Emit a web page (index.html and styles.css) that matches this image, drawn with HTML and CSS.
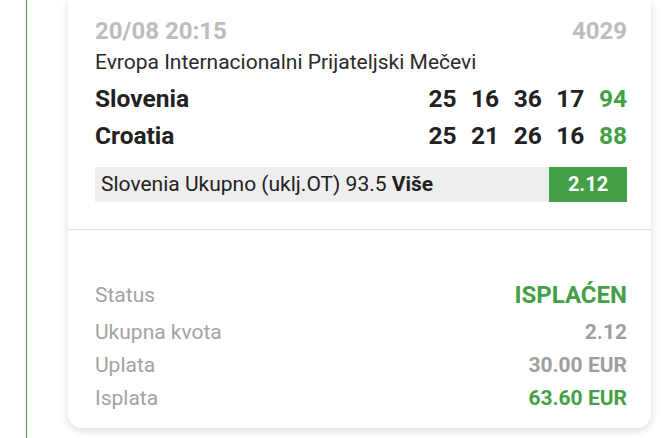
FILE: index.html
```html
<!DOCTYPE html>
<html lang="hr">
<head>
    <meta charset="UTF-8">
    <meta name="viewport" content="width=device-width, initial-scale=1.0">
    <title>Listić 4029</title>
    <link rel="stylesheet" href="styles.css">
</head>
<body>
    <div class="page">
        <div class="ticket">
            <div class="event">
                <div class="event-head">
                    <span class="date">20/08 20:15</span>
                    <span class="code">4029</span>
                </div>
                <div class="league">Evropa Internacionalni Prijateljski Mečevi</div>
                <div class="team-row">
                    <span class="team">Slovenia</span>
                    <span class="scores">
                        <span>25</span><span>16</span><span>36</span><span>17</span><span class="total">94</span>
                    </span>
                </div>
                <div class="team-row">
                    <span class="team">Croatia</span>
                    <span class="scores">
                        <span>25</span><span>21</span><span>26</span><span>16</span><span class="total">88</span>
                    </span>
                </div>
                <div class="bet">
                    <span class="bet-name">Slovenia Ukupno (uklj.OT) 93.5 <b>Više</b></span>
                    <span class="odd">2.12</span>
                </div>
            </div>
            <div class="summary">
                <div class="sum-row status-row">
                    <span class="label">Status</span>
                    <span class="value green">ISPLAĆEN</span>
                </div>
                <div class="sum-row">
                    <span class="label">Ukupna kvota</span>
                    <span class="value">2.12</span>
                </div>
                <div class="sum-row">
                    <span class="label">Uplata</span>
                    <span class="value">30.00 EUR</span>
                </div>
                <div class="sum-row">
                    <span class="label">Isplata</span>
                    <span class="value green">63.60 EUR</span>
                </div>
            </div>
        </div>
    </div>
</body>
</html>
```

FILE: styles.css
```css
body {
    margin: 0;
    padding: 0;
    background: #fff;
    font-family: Roboto, "Noto Sans", sans-serif;
    color: #222;
}
.page {
    margin-left: 26px;
    border-left: 1.5px solid #4e9a57;
    padding-left: 41px;
    height: 438px;
    box-sizing: border-box;
}
.ticket {
    width: 583px;
    background: #fff;
    border-radius: 0 0 14px 14px;
    box-shadow: 0 3px 8px rgba(0, 0, 0, 0.13);
}
.event {
    padding: 18px 24px 27px 27px;
    border-bottom: 1px solid #e0e0e0;
}
.event-head {
    display: flex;
    justify-content: space-between;
    height: 26px;
    line-height: 26px;
    font-size: 24px;
    font-weight: bold;
    color: #bdbdbd;
}
.league {
    height: 36px;
    line-height: 36px;
    font-size: 21px;
    color: #2a2a2a;
}
.team-row {
    display: flex;
    justify-content: space-between;
    height: 37px;
    line-height: 37px;
    font-size: 24.5px;
    font-weight: bold;
}
.scores {
    display: flex;
    gap: 14.5px;
}
.total {
    color: #43a047;
}
.bet {
    display: flex;
    justify-content: space-between;
    margin-top: 13px;
    height: 35px;
    line-height: 35px;
    background: #eeeeee;
    font-size: 21px;
}
.bet-name {
    padding-left: 6px;
}
.odd {
    width: 78px;
    text-align: center;
    background: #43a047;
    color: #fff;
    font-weight: bold;
    font-size: 20px;
}
.summary {
    padding: 47px 24px 13px 27px;
}
.sum-row {
    display: flex;
    justify-content: space-between;
    height: 33px;
    line-height: 33px;
    font-size: 21px;
}
.status-row {
    height: 39px;
    line-height: 36px;
}
.label {
    color: #a3a3a3;
}
.value {
    color: #9e9e9e;
    font-weight: bold;
}
.status-row .value {
    font-size: 24px;
}
.green {
    color: #43a047;
}
```
